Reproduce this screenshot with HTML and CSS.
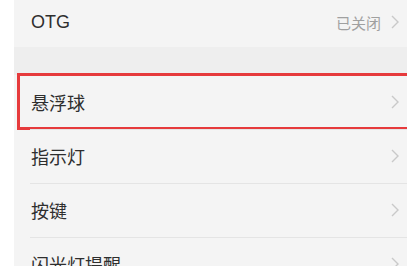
FILE: index.html
```html
<!DOCTYPE html>
<html lang="zh">
<head>
<meta charset="utf-8">
<link rel="stylesheet" href="styles.css">
</head>
<body>
<div class="page">
  <div class="group">
    <div class="row row-first">
      <span class="label">OTG</span>
      <span class="value">已关闭</span>
      <svg class="chev" viewBox="0 0 8 14"><path d="M1 1 L7 7 L1 13"/></svg>
    </div>
  </div>
  <div class="gap"></div>
  <div class="group">
    <div class="row row-hl">
      <span class="label">悬浮球</span>
      <svg class="chev" viewBox="0 0 8 14"><path d="M1 1 L7 7 L1 13"/></svg>
      <div class="highlight"></div>
    </div>
    <div class="row">
      <span class="label">指示灯</span>
      <svg class="chev" viewBox="0 0 8 14"><path d="M1 1 L7 7 L1 13"/></svg>
    </div>
    <div class="row">
      <span class="label">按键</span>
      <svg class="chev" viewBox="0 0 8 14"><path d="M1 1 L7 7 L1 13"/></svg>
    </div>
    <div class="row">
      <span class="label">闪光灯提醒</span>
      <svg class="chev" viewBox="0 0 8 14"><path d="M1 1 L7 7 L1 13"/></svg>
    </div>
  </div>
</div>
</body>
</html>
```

FILE: styles.css
```css
html, body {
  margin: 0;
  padding: 0;
  background: #ffffff;
  overflow: hidden;
}
body {
  width: 407px;
  height: 266px;
  font-family: "Liberation Sans", "Noto Sans CJK SC", sans-serif;
}
.page {
  margin-left: 14px;
  background: #f4f4f4;
  height: 266px;
  overflow: hidden;
}
.group {
  background: #f4f4f4;
}
.gap {
  height: 28px;
  background: #eeeeee;
}
.row {
  position: relative;
  display: flex;
  align-items: center;
  height: 54px;
  padding: 0 8px 0 17px;
  box-sizing: border-box;
}
.row + .row::before {
  content: "";
  position: absolute;
  top: 0;
  left: 16px;
  right: 0;
  height: 1px;
  background: #e4e4e4;
}
.row-first {
  height: 47px;
  padding-bottom: 3px;
}
.label {
  flex: 1;
  font-size: 18px;
  color: #2e2e2e;
}
.value {
  font-size: 15px;
  color: #a0a0a0;
  margin-right: 10px;
}
.chev {
  width: 8px;
  height: 14px;
  fill: none;
  stroke: #c9c9c9;
  stroke-width: 1.4;
}
.highlight {
  position: absolute;
  top: -2px;
  left: 3px;
  right: -10px;
  bottom: -1px;
  border: 3px solid #e63a3c;
  pointer-events: none;
}
```
